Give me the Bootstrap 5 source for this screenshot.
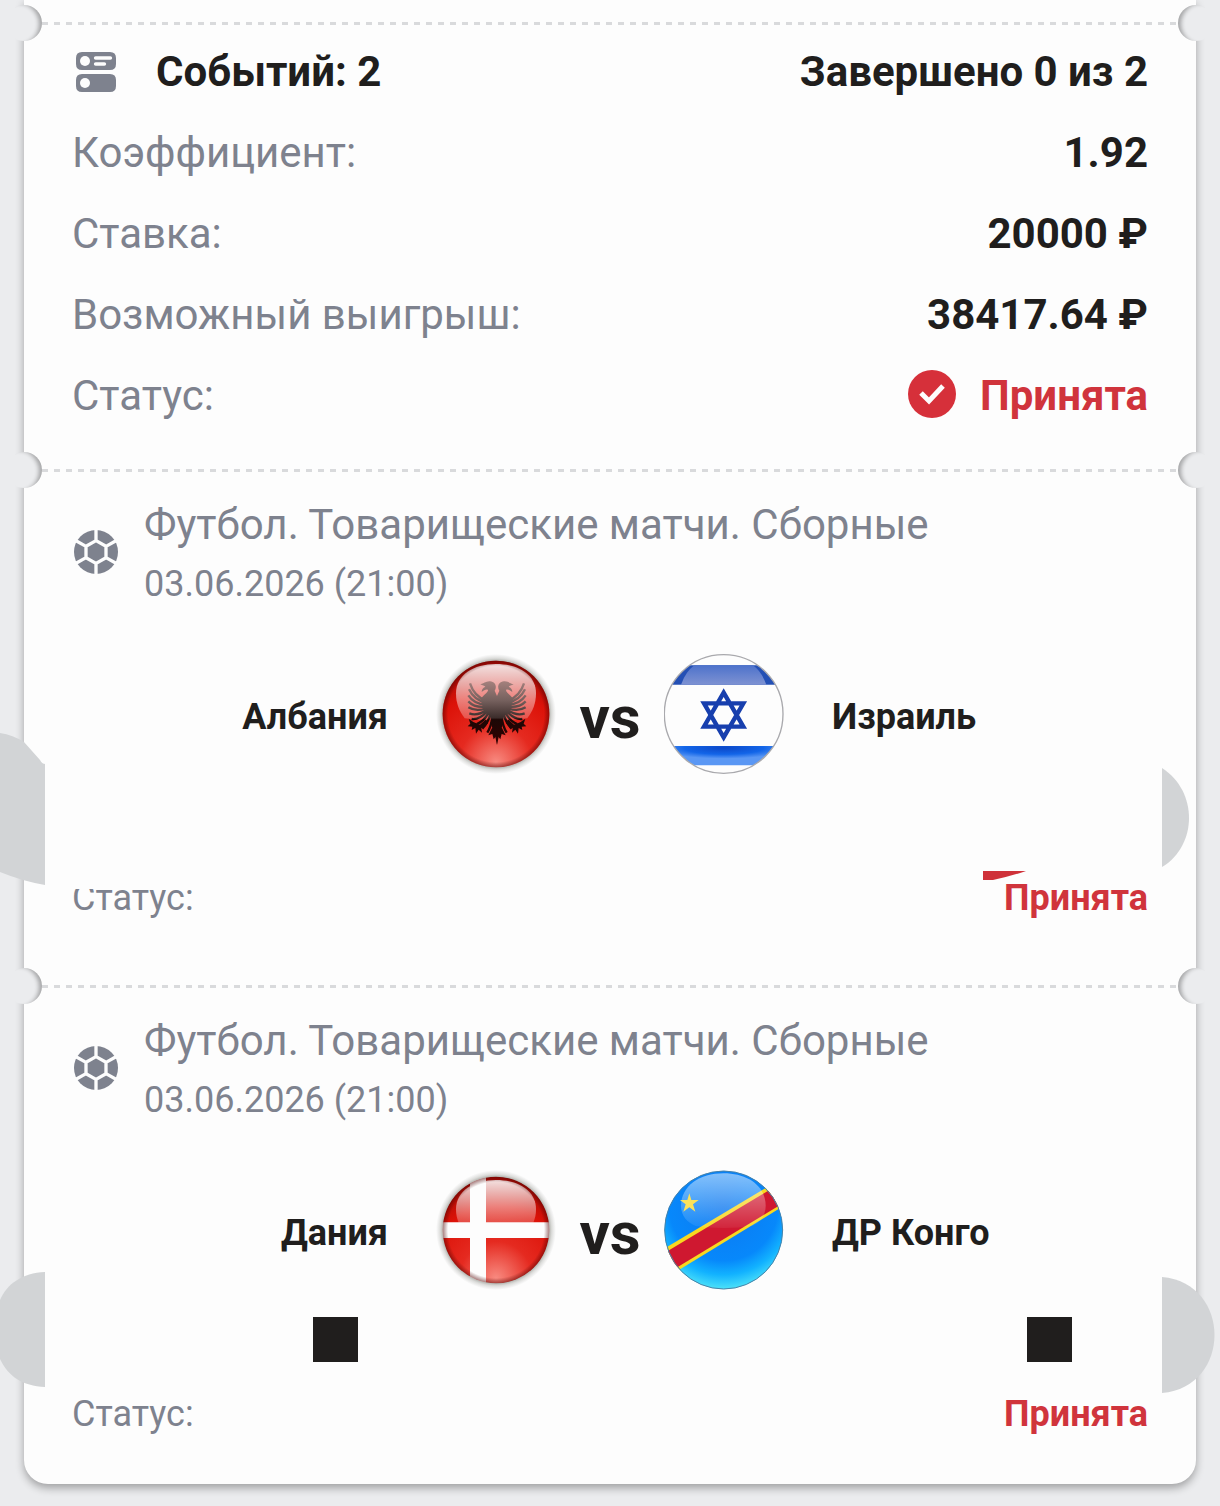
<!DOCTYPE html>
<html lang="ru">
<head>
<meta charset="utf-8">
<meta name="viewport" content="width=device-width, initial-scale=1">
<title>Купон</title>
<link href="https://cdn.jsdelivr.net/npm/bootstrap@5.3.0/dist/css/bootstrap.min.css" rel="stylesheet">
<style>
  body { background: #ebecee; color: #201e1d; font-family: Roboto, "Liberation Sans", sans-serif; font-size: 42px; overflow-x: hidden; }
  .ticket { margin: 0 24px 22px; background: #fdfdfd; border-radius: 0 0 24px 24px; box-shadow: 0 4px 8px rgba(0,0,0,.32); }
  .ticket-stub { height: 23px; }
  .ticket-part { padding: 0 48px; }
  .ticket-part::before { content: ""; position: absolute; left: 18px; right: 18px; top: -1px; height: 3px;
    background: repeating-linear-gradient(90deg, #d9dadc 0 6px, transparent 6px 12px); }
  .notch { position: absolute; top: -18px; width: 36px; height: 36px; border-radius: 50%; background: #ebecee; }
  .notch-start { left: -18px; box-shadow: inset -6px 1px 4px -3px rgba(0,0,0,.3); }
  .notch-end { right: -18px; box-shadow: inset 6px 1px 4px -3px rgba(0,0,0,.3); }
  .summary { padding-top: 8px; padding-bottom: 34px; }
  .summary-row { height: 81px; }
  .muted-text { color: #7e828e; }
  .accepted { color: #d0343c; }
  .event { padding-top: 25px; padding-bottom: 61px; }
  .event-last { padding-bottom: 43px; }
  .event-title { line-height: 60px; }
  .event-date { font-size: 36px; line-height: 58px; }
  .teams { padding-top: 41px; font-size: 36px; }
  .team { gap: 48px; flex: 1 1 0; }
  .team-name { padding-top: 6px; }
  .versus { width: 108px; font-size: 60px; line-height: 60px; }
  .marks { height: 97px; }
  .status { font-size: 36px; line-height: 54px; }
  .clipped { clip-path: inset(18px 0 0 0); }
  .blob { position: absolute; display: block; }
  .blob-a { left: -24px; top: 263px; }
  .blob-b { right: 7px; top: 298px; }
  .blob-c { left: -24px; top: 286px; }
  .blob-d { right: -19px; top: 291px; }
  .wedge { position: absolute; right: 170px; top: 400px; }
  .square { position: absolute; width: 45px; height: 45px; top: 331px; background: #201e1d; }
  .square-a { left: 289px; }
  .square-b { right: 124px; }
  svg { flex-shrink: 0; }
</style>
</head>
<body>
<svg width="0" height="0" class="position-absolute" aria-hidden="true">
  <defs>
    <linearGradient id="gloss" x1="0" y1="0" x2="0" y2="1"><stop offset="0" stop-color="#fff" stop-opacity=".88"/><stop offset="1" stop-color="#fff" stop-opacity=".22"/></linearGradient>
    <linearGradient id="glossSoft" x1="0" y1="0" x2="0" y2="1"><stop offset="0" stop-color="#fff" stop-opacity=".5"/><stop offset="1" stop-color="#fff" stop-opacity=".06"/></linearGradient>
    <radialGradient id="redBall" cx=".5" cy=".95" r=".9"><stop offset="0" stop-color="#f88a80"/><stop offset=".38" stop-color="#e52a20"/><stop offset=".75" stop-color="#dc1208"/><stop offset="1" stop-color="#a90c05"/></radialGradient>
    <radialGradient id="halo"><stop offset=".86" stop-color="#54564a" stop-opacity=".6"/><stop offset=".93" stop-color="#66685e" stop-opacity=".22"/><stop offset="1" stop-color="#777" stop-opacity="0"/></radialGradient>
    <radialGradient id="rim"><stop offset=".9" stop-color="#400" stop-opacity="0"/><stop offset="1" stop-color="#500" stop-opacity=".5"/></radialGradient>
    <linearGradient id="eagleInk" x1="0" y1="125" x2="0" y2="315" gradientUnits="userSpaceOnUse"><stop offset="0" stop-color="#a3807c"/><stop offset=".3" stop-color="#75605d"/><stop offset=".57" stop-color="#3c2d2b"/><stop offset=".6" stop-color="#1c0806"/><stop offset="1" stop-color="#300"/></linearGradient>
    <linearGradient id="blueTop" x1="0" y1="0" x2="0" y2="1"><stop offset="0" stop-color="#4d72cb"/><stop offset="1" stop-color="#7e92d2"/></linearGradient>
    <radialGradient id="blueLow" cx=".5" cy=".1" r=".55"><stop offset="0" stop-color="#0c48c8"/><stop offset=".6" stop-color="#1265e8"/><stop offset="1" stop-color="#5a97f4"/></radialGradient>
    <radialGradient id="congoSky" cx=".5" cy=".3" r=".74"><stop offset="0" stop-color="#0d78f0"/><stop offset=".62" stop-color="#0788fb"/><stop offset=".78" stop-color="#12b2ff"/><stop offset=".95" stop-color="#4fe4f8"/></radialGradient>
    <clipPath id="clipSmall"><circle cx="228" cy="222" r="160"/></clipPath>
    <clipPath id="clipBig"><circle cx="914" cy="222" r="178"/></clipPath>
    <symbol id="football" viewBox="222 273 132 132">
      <circle cx="288" cy="339" r="66" fill="#7e828e"/>
      <path d="M288 305L258 322V356L288 373L318 356V322ZM288 305V268M258 322L224 303M258 356L224 375M288 373V410M318 356L352 375M318 322L352 303" fill="none" stroke="#fdfdfd" stroke-width="10"/>
    </symbol>
  </defs>
</svg>

<main class="ticket position-relative">
  <div class="ticket-stub"></div>

  <section class="ticket-part summary position-relative">
    <span class="notch notch-start"></span><span class="notch notch-end"></span>
    <div class="summary-row d-flex align-items-center justify-content-between fw-bold">
      <div class="d-flex align-items-center">
        <svg class="ms-1 me-3" width="40" height="40" viewBox="228 159 120 120" aria-hidden="true">
          <path fill="#7e828e" d="M246 159H330Q348 159 348 177V195Q348 213 330 213H246Q228 213 228 195V177Q228 159 246 159ZM246 225H330Q348 225 348 243V261Q348 279 330 279H246Q228 279 228 261V243Q228 225 246 225Z"/>
          <circle cx="255" cy="186" r="15" fill="#fdfdfd"/><circle cx="255" cy="252" r="15" fill="#fdfdfd"/>
          <path d="M287 177H331M287 195H313" stroke="#fdfdfd" stroke-width="11" stroke-linecap="round"/>
        </svg>
        <span class="ps-4">Событий: 2</span>
      </div>
      <span>Завершено 0 из 2</span>
    </div>
    <div class="summary-row d-flex align-items-center justify-content-between"><span class="muted-text">Коэффициент:</span><span class="fw-bold">1.92</span></div>
    <div class="summary-row d-flex align-items-center justify-content-between"><span class="muted-text">Ставка:</span><span class="fw-bold">20000 ₽</span></div>
    <div class="summary-row d-flex align-items-center justify-content-between"><span class="muted-text">Возможный выигрыш:</span><span class="fw-bold">38417.64 ₽</span></div>
    <div class="summary-row d-flex align-items-center justify-content-between">
      <span class="muted-text">Статус:</span>
      <span class="fw-bold accepted d-flex align-items-center gap-4">
        <svg class="mb-1" width="48" height="48" viewBox="0 0 48 48" aria-hidden="true"><circle cx="24" cy="24" r="24" fill="#d6303a"/><path d="M13 23L21 31L35 16" fill="none" stroke="#fdfdfd" stroke-width="5"/></svg>Принята</span>
    </div>
  </section>

  <section class="ticket-part event position-relative">
    <span class="notch notch-start"></span><span class="notch notch-end"></span>
    <header class="d-flex align-items-center muted-text">
      <svg class="me-4 mb-1" width="48" height="44" aria-hidden="true"><use href="#football" width="48" height="44"/></svg>
      <div><div class="event-title">Футбол. Товарищеские матчи. Сборные</div><div class="event-date">03.06.2026 (21:00)</div></div>
    </header>
    <div class="teams d-flex align-items-center fw-bold">
      <div class="team d-flex align-items-center justify-content-end"><span class="team-name">Албания</span>
        <svg width="120" height="120" viewBox="48 42 360 360" role="img" aria-label="Флаг Албании">
          <circle cx="228" cy="222" r="180" fill="url(#halo)"/>
          <circle cx="228" cy="222" r="160" fill="url(#redBall)"/>
          <path d="M108 160C108 105 160 72 228 72S348 105 348 160C348 190 338 214 322 235C270 243 186 243 134 235C118 214 108 190 108 160Z" fill="url(#gloss)"/>
          <g stroke="url(#eagleInk)" fill="none" stroke-width="7">
            <path d="M198 182Q162 168 150 130M198 188Q162 180 147 148M198 194Q162 192 145 166M198 200Q164 204 145 184M198 205Q168 216 145 202M200 210Q172 229 148 220M202 214Q178 240 155 237M206 218Q190 246 170 252M211 224Q203 250 187 266M218 228Q214 258 202 278"/>
            <path d="M264 182Q300 168 312 130M264 188Q300 180 315 148M264 194Q300 192 317 166M264 200Q298 204 317 184M264 205Q294 216 317 202M262 210Q290 229 314 220M260 214Q284 240 307 237M256 218Q272 246 292 252M251 224Q259 250 275 266M244 228Q248 258 260 278"/>
          </g>
          <path fill="url(#eagleInk)" d="M231 168L238 152C231 142 234 126 252 124C265 123 270 131 281 133C274 136 269 137 266 140C274 143 277 149 277 156C270 150 262 147 258 150C258 158 270 162 280 178L272 208L251 232L246 262L239 276L231 315L223 276L216 262L211 232L190 208L182 178C192 162 204 158 204 150C200 147 192 150 185 156C185 149 188 143 196 140C193 137 188 136 181 133C192 131 197 123 210 124C228 126 231 142 224 152Z"/>
          <path fill="url(#eagleInk)" d="M198 238L180 254L160 246L146 236L151 251L143 259L157 260L155 270L166 264L168 281L176 269L186 278L184 265L204 250ZM264 238L282 254L302 246L316 236L311 251L319 259L305 260L307 270L296 264L294 281L286 269L276 278L278 265L258 250ZM216 264L205 286L217 282L221 298L229 288L231 314L233 288L241 298L245 282L257 286L246 264Z"/>
          <circle cx="228" cy="222" r="160" fill="url(#rim)"/>
        </svg></div>
      <div class="versus text-center pt-2">vs</div>
      <div class="team d-flex align-items-center">
        <svg width="120" height="120" viewBox="735 42 360 360" role="img" aria-label="Флаг Израиля">
          <circle cx="914" cy="222" r="178" fill="#fdfdfd"/>
          <g clip-path="url(#clipBig)">
            <path fill="#2450b5" d="M735 76H1095V134H735Z"/>
            <path fill="url(#blueTop)" d="M826 76H1002Q1028 95 1042 134H786Q800 95 826 76Z"/>
            <path fill="url(#blueLow)" d="M735 318H1095V376H735Z"/>
          </g>
          <path d="M914 158L973 260H855ZM914 292L855 190H973Z" fill="none" stroke="#173fae" stroke-width="13"/>
          <circle cx="914" cy="222" r="178" fill="none" stroke="#a9a9ad" stroke-width="4"/>
        </svg><span class="team-name">Израиль</span></div>
    </div>
    <div class="marks"></div>
    <div class="status d-flex justify-content-between"><span class="muted-text clipped">Статус:</span><span class="accepted fw-bold">Принята</span></div>
    <svg class="blob blob-a" width="45" height="153" viewBox="0 0 45 153" aria-hidden="true"><path fill="#d2d4d6" d="M0 0Q13 2 24 9L40 27Q42 31 45 31V152Q22 148 0 139Z"/></svg>
    <svg class="blob blob-b" width="27" height="99" viewBox="0 0 27 99" aria-hidden="true"><path fill="#d2d4d6" d="M0 0C36 23 36 77 0 99Z"/></svg>
    <svg class="wedge" width="43" height="11" viewBox="0 0 43 11" aria-hidden="true"><path fill="#cf3139" d="M0 1H43Q25 7 10 10H0Z"/></svg>
  </section>

  <section class="ticket-part event event-last position-relative">
    <span class="notch notch-start"></span><span class="notch notch-end"></span>
    <header class="d-flex align-items-center muted-text">
      <svg class="me-4 mb-1" width="48" height="44" aria-hidden="true"><use href="#football" width="48" height="44"/></svg>
      <div><div class="event-title">Футбол. Товарищеские матчи. Сборные</div><div class="event-date">03.06.2026 (21:00)</div></div>
    </header>
    <div class="teams d-flex align-items-center fw-bold">
      <div class="team d-flex align-items-center justify-content-end"><span class="team-name">Дания</span>
        <svg width="120" height="120" viewBox="48 42 360 360" role="img" aria-label="Флаг Дании">
          <circle cx="228" cy="222" r="180" fill="url(#halo)"/>
          <g clip-path="url(#clipSmall)">
            <circle cx="228" cy="222" r="160" fill="url(#redBall)"/>
            <path d="M108 160C108 105 160 72 228 72S348 105 348 160C348 176 345 188 340 200H116C111 188 108 176 108 160Z" fill="url(#gloss)"/>
            <path fill="#fdfdfd" d="M150 50H198V199H400V246H198V400H150V246H50V199H150Z"/>
          </g>
          <circle cx="228" cy="222" r="160" fill="url(#rim)"/>
        </svg></div>
      <div class="versus text-center pt-2">vs</div>
      <div class="team d-flex align-items-center">
        <svg width="120" height="120" viewBox="735 42 360 360" role="img" aria-label="Флаг ДР Конго">
          <g clip-path="url(#clipBig)">
            <circle cx="914" cy="222" r="178" fill="url(#congoSky)"/>
            <path fill="#f8d820" d="M720 287L1060 84L1110 140L760 354Z"/>
            <path fill="#cf1830" d="M720 301L1060 97L1110 131L760 343Z"/>
            <path d="M786 150C786 90 842 52 914 52S1040 90 1040 150C1040 180 1020 202 1000 210C950 218 880 218 830 210C805 200 786 180 786 150Z" fill="url(#glossSoft)"/>
          </g>
          <path fill="#fbe25a" d="M811 112L817 132L839 132L822 145L829 167L811 154L793 167L800 145L783 132L805 132Z"/>
          <circle cx="914" cy="222" r="177" fill="none" stroke="#4a83a8" stroke-width="3"/>
        </svg><span class="team-name">ДР Конго</span></div>
    </div>
    <div class="marks"></div>
    <div class="status d-flex justify-content-between"><span class="muted-text">Статус:</span><span class="accepted fw-bold">Принята</span></div>
    <svg class="blob blob-c" width="45" height="116" viewBox="0 0 45 116" aria-hidden="true"><path fill="#d2d4d6" d="M45 0C22 1 7 12 0 28V87C8 104 22 114 45 115Z"/></svg>
    <svg class="blob blob-d" width="53" height="116" viewBox="0 0 53 116" aria-hidden="true"><path fill="#d2d4d6" d="M0 0C70 6 70 110 0 116Z"/></svg>
    <span class="square square-a"></span><span class="square square-b"></span>
  </section>
</main>
<script src="https://cdn.jsdelivr.net/npm/bootstrap@5.3.0/dist/js/bootstrap.bundle.min.js"></script>
</body>
</html>
